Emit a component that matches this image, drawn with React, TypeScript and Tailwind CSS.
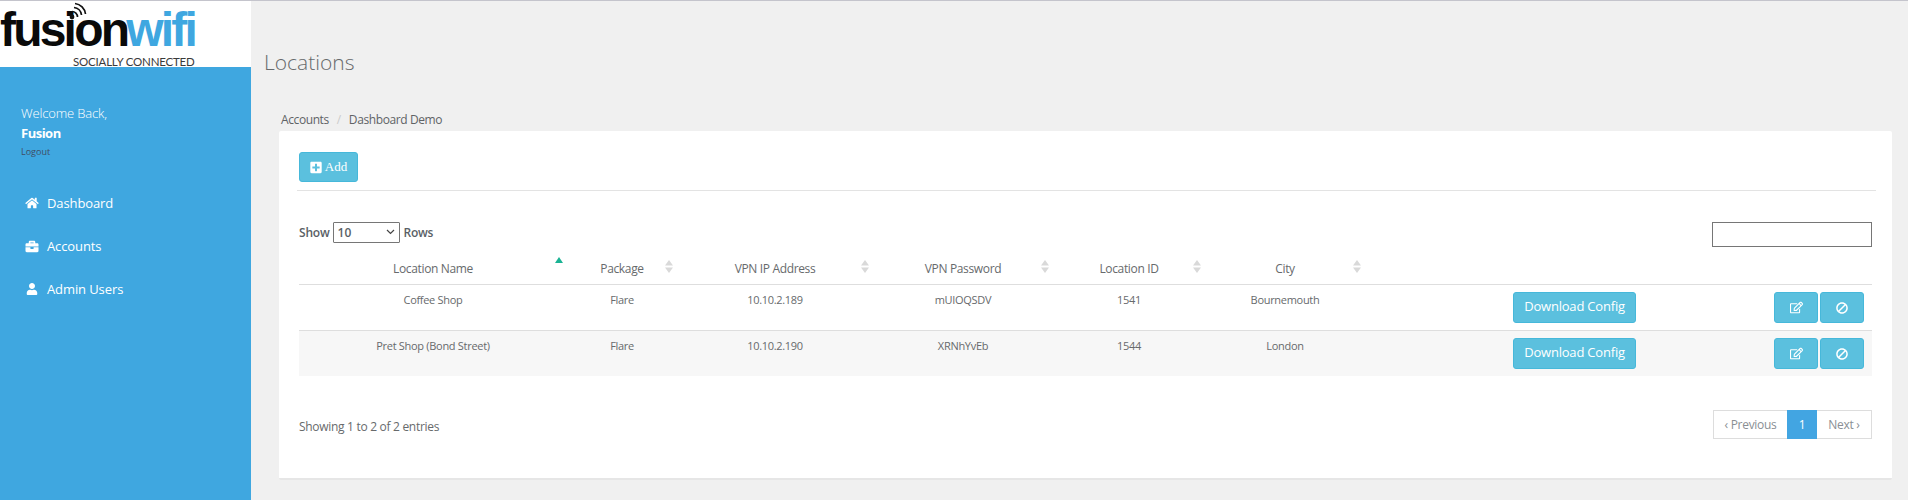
import React from "react";
import { FaHome, FaBriefcase, FaUser, FaPlusSquare, FaRegEdit, FaBan } from "react-icons/fa";

const font = { fontFamily: '"Open Sans", sans-serif' };

function Sort({ active }: { active?: boolean }) {
  if (active) {
    return (
      <svg className="absolute right-[4px] top-[-3px]" width="8" height="6" viewBox="0 0 8 6">
        <path d="M4 0 L8 6 L0 6 Z" fill="#1ab394" />
      </svg>
    );
  }
  return (
    <svg className="absolute right-[4px] top-[0px]" width="8" height="13" viewBox="0 0 8 13">
      <path d="M4 0 L8 5.5 L0 5.5 Z M0 7.5 L8 7.5 L4 13 Z" fill="#d9d9d9" />
    </svg>
  );
}

const heads = ["Location Name", "Package", "VPN IP Address", "VPN Password", "Location ID", "City"];
const rows = [
  ["Coffee Shop", "Flare", "10.10.2.189", "mUIOQSDV", "1541", "Bournemouth"],
  ["Pret Shop (Bond Street)", "Flare", "10.10.2.190", "XRNhYvEb", "1544", "London"],
];

function InfoBtn({ children, className }: { children: React.ReactNode; className: string }) {
  return (
    <button className={"inline-flex items-center justify-center h-[31px] rounded-[3px] bg-[#5bc0de] border border-[#46b8da] text-white " + className}>
      {children}
    </button>
  );
}

export default function App() {
  return (
    <div className="h-[500px] overflow-hidden flex flex-col bg-[#f0f0f0] text-[#676a6c]" style={font}>
      <div className="h-px bg-[#c4c4cc] shrink-0" />
      <div className="flex flex-1 min-h-0">
        <aside className="w-[251px] shrink-0 bg-[#3fa7e0] flex flex-col">
          <div className="relative h-[66px] bg-white overflow-hidden">
            <div className="flex pt-[3px] pl-[0px] leading-[52px] text-[48px] tracking-[-2.8px]" style={{ fontFamily: '"Liberation Sans", sans-serif' }}>
              <span className="font-bold text-[#0a0a0a]">fusion</span>
              <span className="font-bold text-[#3fa7e0] -ml-[1px]">wifi</span>
            </div>
            <svg className="absolute left-[67px] top-[1px]" width="22" height="18" viewBox="0 0 22 18">
              <circle cx="5" cy="15" r="2.4" fill="#111" />
              <path d="M5 9.5 A5.5 5.5 0 0 1 10.5 15" stroke="#111" strokeWidth="1.7" fill="none" />
              <path d="M7 5.5 A8.5 8.5 0 0 1 14.5 13" stroke="#111" strokeWidth="1.7" fill="none" />
              <path d="M8 1.5 A12 12 0 0 1 18.5 12" stroke="#111" strokeWidth="1.7" fill="none" />
            </svg>
            <div className="absolute left-[73px] top-[54px] text-[11.5px] leading-[14px] text-[#3a3a3a] whitespace-nowrap tracking-[-0.2px]" style={{ fontFamily: 'Lato, sans-serif' }}>
              SOCIALLY CONNECTED
            </div>
          </div>
          <div className="pl-[21px] pt-[36px]">
            <div className="text-[13px] leading-[20px] text-white font-light tracking-[-0.15px]">Welcome Back,</div>
            <div className="text-[13px] leading-[20px] text-white font-bold tracking-[-0.5px]">Fusion</div>
            <div className="text-[9px] leading-[18px] text-[#3f4d63]">Logout</div>
          </div>
          <nav className="mt-[32px] flex flex-col gap-[23px] text-[13px] leading-[20px] text-white tracking-[-0.1px]">
            <div className="flex items-center pl-[25px]"><FaHome className="w-[14px] h-[12px] mr-[8px]" />Dashboard</div>
            <div className="flex items-center pl-[25px]"><FaBriefcase className="w-[14px] h-[13px] mr-[8px]" />Accounts</div>
            <div className="flex items-center pl-[25px]"><FaUser className="w-[14px] h-[12px] mr-[8px]" />Admin Users</div>
          </nav>
        </aside>
        <main className="flex-1 min-w-0 pl-[28px] pr-[16px]">
          <h1 className="-ml-[15px] mt-[47px] h-[28px] text-[21px] leading-[28px] font-light text-[#676a6c]">Locations</h1>
          <div className="mt-[35px] h-[18px] flex items-center text-[12px] leading-[18px] text-[#5f6366] tracking-[-0.4px]">
            <span className="ml-[2px]">Accounts</span>
            <span className="mx-[8px] text-[#ccc]">/</span>
            <span>Dashboard Demo</span>
          </div>
          <section className="mt-[2px] h-[349px] bg-white border-b-2 border-[#e6e6e6] rounded-[2px] px-[20px] pt-[21px]">
            <button className="flex items-center justify-center w-[59px] h-[30px] rounded-[3px] bg-[#5bc0de] border border-[#46b8da] text-white text-[13px]" style={{ fontFamily: '"Liberation Serif", serif' }}>
              <FaPlusSquare className="w-[12px] h-[13px] mr-[3px]" />Add
            </button>
            <div className="mt-[8px] -ml-[2px] mr-[-4px] border-t border-[#e3e3e3]" />
            <div className="mt-[31px] h-[25px] flex items-center justify-between">
              <div className="flex items-center text-[12px] font-semibold text-[#5a5f66] -translate-y-[2px]">
                <span className="tracking-[-0.2px]">Show</span>
                <div className="relative ml-[3px] mr-[4px] w-[67px] h-[21px] border border-[#767676] rounded-[1px] bg-white flex items-center pl-[4px] text-[12px] font-semibold">
                  10
                  <svg className="absolute right-[4px] top-[6px]" width="9" height="6" viewBox="0 0 9 6"><path d="M1 1 L4.5 4.5 L8 1" stroke="#444" strokeWidth="1.2" fill="none" /></svg>
                </div>
                <span className="tracking-[-0.3px]">Rows</span>
              </div>
              <input className="w-[160px] h-[25px] border border-[#767676] bg-white outline-none" aria-label="Search" />
            </div>
            <table className="table-fixed w-[1573px] border-collapse text-center">
              <colgroup>
                <col className="w-[268px]" /><col className="w-[110px]" /><col className="w-[196px]" /><col className="w-[180px]" /><col className="w-[152px]" /><col className="w-[160px]" /><col className="w-[401px]" /><col className="w-[106px]" />
              </colgroup>
              <thead>
                <tr className="h-[37px] border-b border-[#dedede]">
                  {heads.map((h, i) => (
                    <th key={h} className="font-normal text-[12px] leading-[18px] align-top pt-[13px] text-[#676a6c] tracking-[-0.35px]">
                      <span className="relative block">
                        {h}
                        <Sort active={i === 0} />
                      </span>
                    </th>
                  ))}
                  <th /><th />
                </tr>
              </thead>
              <tbody>
                {rows.map((r, i) => (
                  <tr key={r[0]} className={"h-[46px] " + (i === 0 ? "border-b border-[#dedede]" : "bg-[#f7f7f7]")}>
                    {r.map((c, j) => (
                      <td key={j} className="align-top pt-[6px] text-[11px] leading-[17px] text-[#676a6c] tracking-[-0.3px]">{c}</td>
                    ))}
                    <td className="align-top pt-[7px] text-right pr-[130px]">
                      <InfoBtn className="w-[123px] text-[13px] font-normal tracking-[-0.2px]">Download Config</InfoBtn>
                    </td>
                    <td className="align-top pt-[7px] text-right pr-[8px] whitespace-nowrap">
                      <InfoBtn className="w-[44px] mr-[2px]"><FaRegEdit className="w-[13px] h-[13px]" /></InfoBtn>
                      <InfoBtn className="w-[44px]"><FaBan className="w-[12px] h-[12px] -scale-x-100" /></InfoBtn>
                    </td>
                  </tr>
                ))}
              </tbody>
            </table>
            <div className="mt-[34px] flex items-center justify-between">
              <div className="text-[12px] leading-[18px] text-[#676a6c] tracking-[-0.3px] translate-y-[2px]">Showing 1 to 2 of 2 entries</div>
              <div className="flex h-[29px] text-[12px] text-[#8a8f94] tracking-[-0.3px]">
                <div className="w-[74px] border border-[#dddddd] border-r-0 flex items-center justify-center">‹ Previous</div>
                <div className="w-[30px] bg-[#42a5e2] text-white flex items-center justify-center">1</div>
                <div className="w-[55px] border border-[#dddddd] border-l-0 flex items-center justify-center">Next ›</div>
              </div>
            </div>
          </section>
        </main>
      </div>
    </div>
  );
}
